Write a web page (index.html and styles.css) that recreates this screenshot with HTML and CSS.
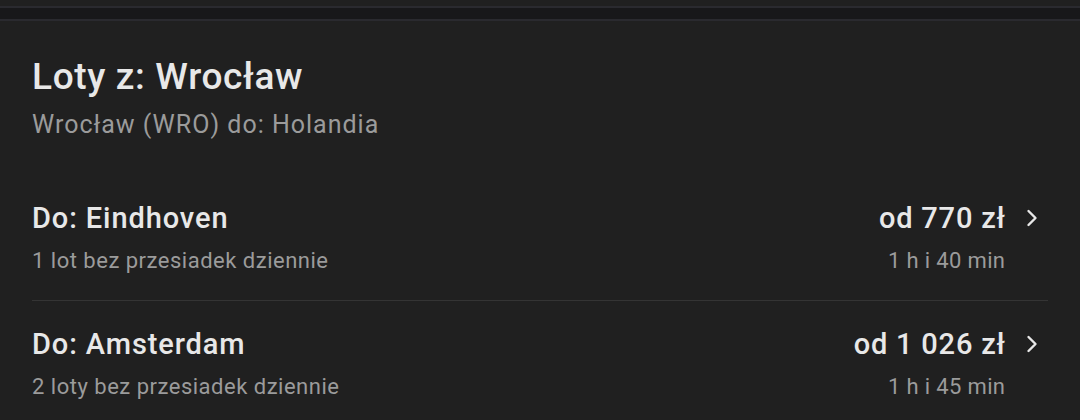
FILE: index.html
```html
<!DOCTYPE html>
<html lang="pl">
<head>
<meta charset="utf-8">
<title>Loty z: Wrocław</title>
<link rel="stylesheet" href="styles.css">
</head>
<body>
<div class="topbar">
  <div class="topbar-gap"></div>
  <div class="topbar-band"></div>
</div>
<section class="flights">
  <h1 class="title">Loty z: Wrocław</h1>
  <p class="subtitle">Wrocław (WRO) do: Holandia</p>
  <ul class="list">
    <li class="row">
      <span class="dest">Do: Eindhoven</span>
      <span class="price">od 770 zł</span>
      <svg class="chev" viewBox="0 0 12 18" width="12" height="18" aria-hidden="true"><polyline points="2.5,2 9.5,9 2.5,16" fill="none" stroke="#e8e8e8" stroke-width="2.4" stroke-linecap="round" stroke-linejoin="round"/></svg>
      <span class="info">1 lot bez przesiadek dziennie</span>
      <span class="dur">1 h i 40 min</span>
    </li>
    <li class="row">
      <span class="dest">Do: Amsterdam</span>
      <span class="price">od 1 026 zł</span>
      <svg class="chev" viewBox="0 0 12 18" width="12" height="18" aria-hidden="true"><polyline points="2.5,2 9.5,9 2.5,16" fill="none" stroke="#e8e8e8" stroke-width="2.4" stroke-linecap="round" stroke-linejoin="round"/></svg>
      <span class="info">2 loty bez przesiadek dziennie</span>
      <span class="dur">1 h i 45 min</span>
    </li>
  </ul>
</section>
</body>
</html>
```

FILE: styles.css
```css
html, body {
  margin: 0;
  padding: 0;
  background: #202020;
  font-family: Roboto, "Noto Sans", sans-serif;
}

.topbar {
  padding-top: 6px;
}

.topbar-gap {
  height: 2px;
  background: #2a2a2f;
}

.topbar-band {
  height: 11px;
  background: #18181a;
  border-bottom: 2px solid #2a2a2f;
}

.flights {
  padding: 34px 32px 0;
}

.title {
  margin: 0;
  font-size: 37px;
  line-height: 44px;
  font-weight: 500;
  letter-spacing: 0.65px;
  color: #e8e8e8;
}

.subtitle {
  margin: 10px 0 0;
  font-size: 25px;
  line-height: 32px;
  font-weight: 400;
  letter-spacing: 1px;
  color: #9b9b9b;
}

.list {
  list-style: none;
  margin: 34px 0 0;
  padding: 0;
}

.row {
  display: grid;
  grid-template-columns: 1fr auto 12px;
  column-gap: 21px;
  row-gap: 11px;
  align-items: center;
  padding: 25px 10px 25px 0;
  border-bottom: 1px solid #343434;
}

.dest {
  font-size: 29px;
  line-height: 36px;
  font-weight: 500;
  letter-spacing: 0.9px;
  color: #e8e8e8;
}

.price {
  font-size: 29px;
  line-height: 36px;
  font-weight: 500;
  letter-spacing: 0.8px;
  margin-right: -0.8px;
  color: #e8e8e8;
  text-align: right;
}

.chev {
  display: block;
}

.info {
  font-size: 22px;
  line-height: 28px;
  letter-spacing: 0.5px;
  color: #9b9b9b;
}

.dur {
  font-size: 22px;
  line-height: 28px;
  letter-spacing: 0.35px;
  margin-right: -0.35px;
  color: #9b9b9b;
  text-align: right;
}
```
